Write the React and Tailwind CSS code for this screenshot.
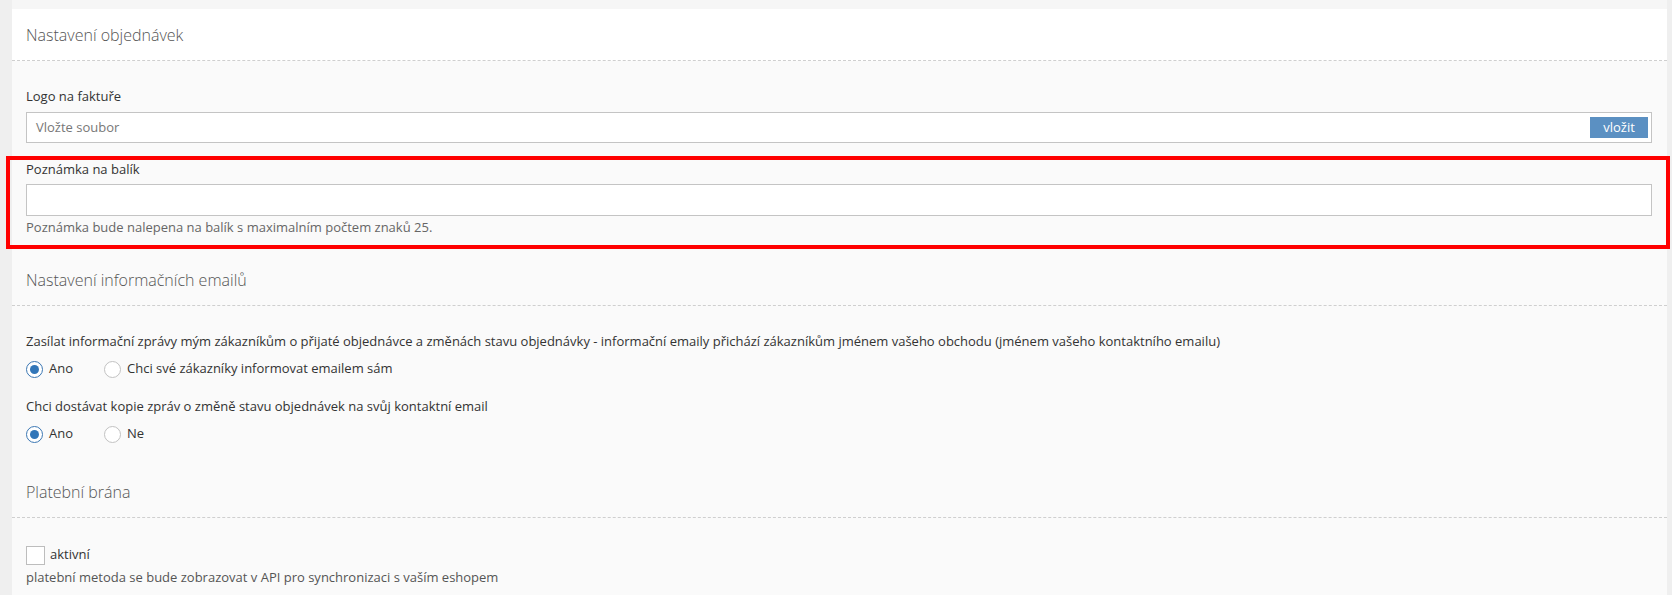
function SectionHeader({ title, white }) {
  return (
    <div
      className={`h-[52px] flex items-center pl-[14px] border-b border-dashed border-[#cfcfcf] ${
        white ? "bg-white" : ""
      }`}
    >
      <h2 className="text-[16px] font-light text-[#555] leading-none">{title}</h2>
    </div>
  );
}

function Radio({ checked, label }) {
  return (
    <label className="flex items-center gap-[6px] h-[20px]">
      <span
        className={`w-[17px] h-[17px] rounded-full border bg-white flex items-center justify-center ${
          checked ? "border-[#3b77b3]" : "border-[#c2c2c2]"
        }`}
      >
        {checked && <span className="w-[9px] h-[9px] rounded-full bg-[#3276b8]" />}
      </span>
      <span className="text-[13px] text-[#333]">{label}</span>
    </label>
  );
}

export default function App() {
  return (
    <div
      className="min-h-screen bg-[#efefef] pl-[12px] pr-[5px]"
      style={{ fontFamily: '"Open Sans", "Liberation Sans", sans-serif' }}
    >
      <div className="bg-[#fafafa]">
        <div className="h-[9px] bg-[#f6f6f6]" />

        {/* Nastavení objednávek */}
        <SectionHeader title="Nastavení objednávek" white />
        <div className="pt-[26px] pb-[18px] pl-[14px] pr-[15px]">
          <label className="block text-[13px] leading-[18px] text-[#333] mb-[7px]">
            Logo na faktuře
          </label>
          <div className="h-[31px] bg-white border border-[#c4c4c4] flex items-center justify-between pl-[9px] pr-[3px]">
            <span className="text-[13px] text-[#777]">Vložte soubor</span>
            <button className="h-[21px] w-[58px] bg-[#5b90c2] text-white text-[13px] leading-none">
              vložit
            </button>
          </div>

          <div className="relative mt-[17px]">
            <div className="absolute -top-[4px] -left-[20px] -right-[18px] -bottom-[13px] border-4 border-[#ff0000] pointer-events-none" />
            <label className="block text-[13px] leading-[18px] text-[#333] mb-[6px]">
              Poznámka na balík
            </label>
            <input
              type="text"
              className="block w-full h-[32px] bg-white border border-[#c4c4c4] px-[9px] text-[13px] outline-none"
            />
            <p className="mt-[2px] text-[13px] leading-[18px] text-[#666]">
              Poznámka bude nalepena na balík s maximalním počtem znaků 25.
            </p>
          </div>
        </div>

        {/* Nastavení informačních emailů */}
        <SectionHeader title="Nastavení informačních emailů" />
        <div className="pt-[26px] pb-[22px] pl-[14px] pr-[15px]">
          <p className="text-[13px] leading-[18px] text-[#333]">
            Zasílat informační zprávy mým zákazníkům o přijaté objednávce a změnách stavu
            objednávky - informační emaily přichází zákazníkům jménem vašeho obchodu (jménem
            vašeho kontaktního emailu)
          </p>
          <div className="flex gap-[31px] mt-[9px]">
            <Radio checked label="Ano" />
            <Radio label="Chci své zákazníky informovat emailem sám" />
          </div>
          <p className="mt-[18px] text-[13px] leading-[18px] text-[#333]">
            Chci dostávat kopie zpráv o změně stavu objednávek na svůj kontaktní email
          </p>
          <div className="flex gap-[31px] mt-[9px]">
            <Radio checked label="Ano" />
            <Radio label="Ne" />
          </div>
        </div>

        {/* Platební brána */}
        <SectionHeader title="Platební brána" />
        <div className="pt-[27px] pb-[20px] pl-[14px] pr-[15px]">
          <label className="flex items-center gap-[5px] h-[20px]">
            <span className="w-[19px] h-[19px] bg-white border border-[#bdbdbd]" />
            <span className="text-[13px] text-[#333]">aktivní</span>
          </label>
          <p className="mt-[3px] text-[13px] leading-[18px] text-[#555]">
            platební metoda se bude zobrazovat v API pro synchronizaci s vaším eshopem
          </p>
        </div>
      </div>
    </div>
  );
}
